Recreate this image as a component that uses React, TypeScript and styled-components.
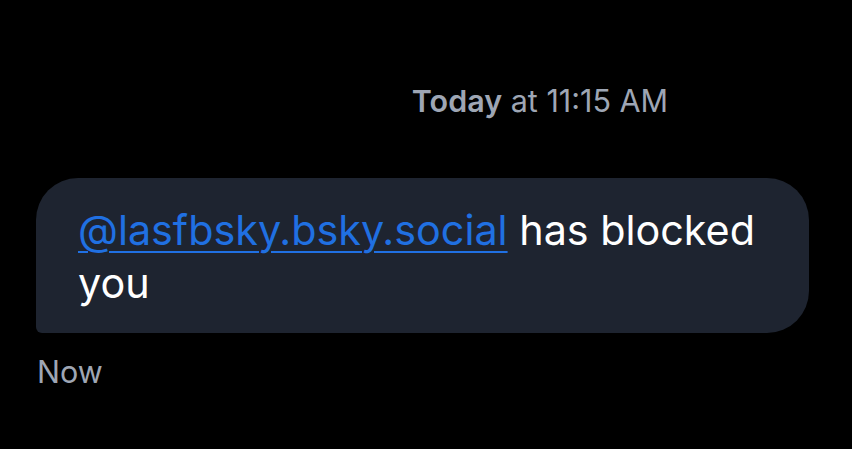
import styled, { createGlobalStyle } from "styled-components";

const GlobalStyle = createGlobalStyle`
  html, body {
    margin: 0;
    padding: 0;
    background: #000;
  }
  body {
    font-family: Inter, "Noto Sans", sans-serif;
    -webkit-font-smoothing: antialiased;
  }
`;

const Screen = styled.div`
  width: 852px;
  height: 449px;
  background: #000;
  display: flex;
  flex-direction: column;
  overflow: hidden;
`;

const Stamp = styled.div`
  padding: 83px 0 0 228px;
  text-align: center;
  color: #9ea6b4;
  font-size: 30.5px;
  line-height: 36px;
  b {
    font-weight: 600;
  }
`;

const Thread = styled.div`
  display: flex;
  flex-direction: column;
  align-items: flex-start;
  padding: 59px 43px 0 36px;
`;

const Bubble = styled.div`
  box-sizing: border-box;
  width: 100%;
  background: #1e2430;
  border-radius: 42px 42px 42px 6px;
  padding: 26px 42px 23px;
  color: #fff;
  font-size: 41.3px;
  line-height: 53px;
`;

const Mention = styled.a`
  color: #2070e2;
  text-decoration: underline;
  text-decoration-thickness: 2px;
  text-underline-offset: 6px;
`;

const Meta = styled.div`
  margin-top: 21px;
  padding-left: 1px;
  color: #9ea6b4;
  font-size: 30.5px;
  line-height: 36px;
`;

export default function App() {
  return (
    <Screen>
      <GlobalStyle />
      <Stamp>
        <b>Today</b> at 11:15 AM
      </Stamp>
      <Thread>
        <Bubble>
          <Mention href="#">@lasfbsky.bsky.social</Mention> has blocked you
        </Bubble>
        <Meta>Now</Meta>
      </Thread>
    </Screen>
  );
}
